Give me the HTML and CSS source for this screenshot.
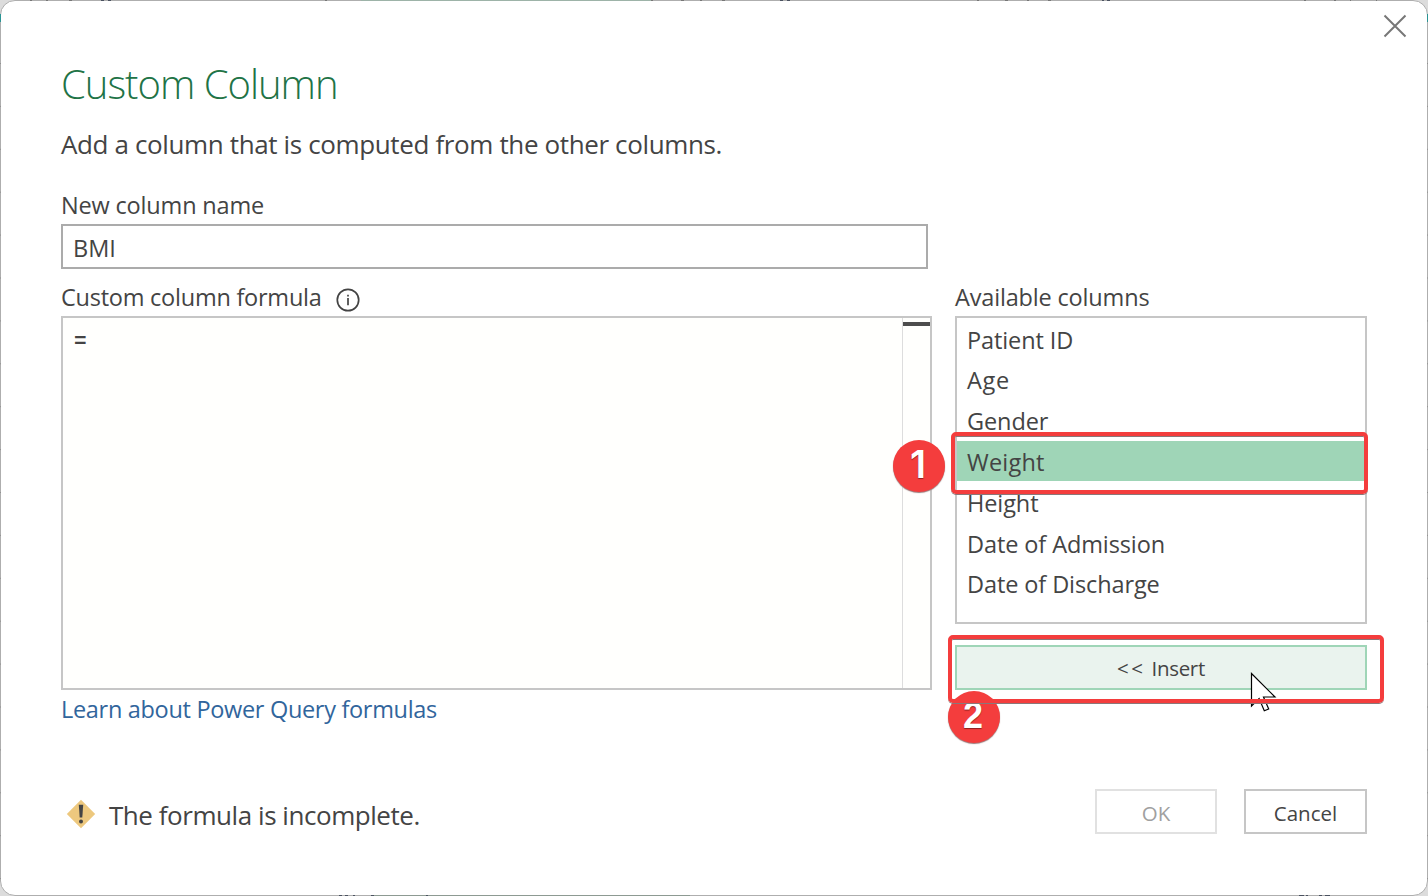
FILE: index.html
```
<!DOCTYPE html>
<html lang="en">
<head>
<meta charset="utf-8">
<title>Custom Column</title>
<link rel="stylesheet" href="styles.css">
</head>
<body>
<main class="dialog">
  <button class="close" aria-label="Close"><svg width="24" height="24" viewBox="0 0 24 24"><path d="M1.5 1.5 22.5 22.5M22.5 1.5 1.5 22.5"/></svg></button>
  <h1 class="title"><span>Custom Column</span></h1>
  <p class="subtitle"><span>Add a column that is computed from the other columns.</span></p>
  <label class="label name-label"><span>New column name</span></label>
  <div class="name-input"><span>BMI</span></div>
  <div class="columns">
    <section class="formula">
      <div class="label formula-label"><span>Custom column formula</span>
        <svg class="info" width="24" height="24" viewBox="0 0 24 24"><circle cx="12" cy="12" r="10.7"/><path d="M12 10v7.2M12 6.8v1.8"/></svg>
      </div>
      <div class="editor"><span class="code">=</span><div class="ruler"></div></div>
      <a class="link"><span>Learn about Power Query formulas</span></a>
    </section>
    <section class="available">
      <div class="label avail-label"><span>Available columns</span></div>
      <ul class="list">
        <li>Patient ID</li>
        <li class="short">Age</li>
        <li>Gender</li>
        <li class="selected">Weight</li>
        <li>Height</li>
        <li>Date of Admission</li>
        <li>Date of Discharge</li>
      </ul>
      <button class="btn insert"><span class="arrows">&lt;&lt;</span><span>Insert</span></button>
    </section>
  </div>
  <footer class="footer">
    <svg class="warn" width="30" height="30" viewBox="0 0 30 30"><path class="diamond" d="M15 .8 29.2 15 15 29.2.8 15Z"/><path class="bang" d="M12.8 5.8h4.4l-.9 12.6h-2.6Z"/><circle class="bang" cx="15" cy="22.4" r="2"/></svg>
    <p class="message"><span>The formula is incomplete.</span></p>
    <button class="btn ok" disabled><span>OK</span></button>
    <button class="btn cancel"><span>Cancel</span></button>
  </footer>
</main>
<svg class="backdrop" width="1428" height="896" viewBox="0 0 1428 896">
  <path stroke="#9db3a8" d="M361 .5H651"/>
  <path stroke="#8d9a92" d="M374 895.5H690"/>
  <path stroke="#777" d="M30 .5h2M46 .5h2M69 .5h3M325 .5h2M651 .5h2M681 .5h3M700 .5h2M722 .5h3M977 .5h2M1005 .5h3M1027 .5h2M1048 .5h3M1304 .5h2M1334 .5h2M1350 .5h1M1376 .5h1"/>
  <path stroke="#4a5260" d="M101 .5h3M108 .5h3M780 .5h3M787 .5h3M1102 .5h2M1107 .5h3M339 895.5h3M345 895.5h3M353 895.5h2M371 895.5h3M426 895.5h2M1299 895.5h5M1306 895.5h2M1319 895.5h3M1325 895.5h5"/>
  <path class="ticks" stroke-dasharray="1 41.9" d="M.5 63V880M1427.5 63V880"/>
  <path stroke="#2a9494" d="M.5 14v8M1427.5 14v8"/>
</svg>
<div class="badge badge-one"><span>1</span></div>
<div class="badge badge-two"><span>2</span></div>
<svg class="cursor" width="28" height="42" viewBox="0 0 28 42"><path d="M1.5 1.5V34l7.6-7.4 5.2 12.2 4.4-1.8-5.2-12H25Z"/></svg>
<div class="frame frame-one"></div>
<div class="frame frame-two"></div>
</body>
</html>
```
FILE: styles.css
```
* { box-sizing: border-box; margin: 0; padding: 0; }
body {
  width: 1428px; height: 896px; overflow: hidden; position: relative;
  background: #dcdcdc;
  font-family: "Open Sans", "Noto Sans", sans-serif; color: #444;
}
button { font: inherit; color: inherit; background: none; border: 0; }
.dialog {
  width: 1428px; height: 896px; padding: 59px 60px 0;
  background: #fff; border: 1px solid #aeaeae; border-radius: 15px;
  display: flex; flex-direction: column;
}
.backdrop { position: absolute; left: 0; top: 0; pointer-events: none; }
.ticks { stroke: #919191; }
.close { position: absolute; left: 1383px; top: 14px; width: 24px; height: 24px; }
.close svg { display: block; fill: none; stroke: #777; stroke-width: 2; }
.title { font-size: 40px; line-height: 48px; font-weight: 300; letter-spacing: -1px; color: #217346; white-space: nowrap; }
.subtitle { font-size: 26px; line-height: 34px; margin-top: 19px; letter-spacing: -.37px; white-space: nowrap; }
.label { font-size: 23.5px; line-height: 32px; height: 32px; display: block; letter-spacing: -.17px; white-space: nowrap; }
.name-label { margin-top: 28px; }
.name-input {
  width: 867px; height: 45px; margin-top: 3px; padding-left: 10px;
  border: 2px solid #ababab; font-size: 23.5px; line-height: 44px;
}
.columns { display: grid; grid-template-columns: 871px 412px; column-gap: 23px; margin-top: 12px; }
.formula-label { display: flex; align-items: center; gap: 14px; letter-spacing: -.24px; }
.info { fill: none; stroke: #444; stroke-width: 1.7; margin-top: 6px; }
.editor {
  height: 374px; margin-top: 3px; border: 2px solid #c6c6c6; background: #fffffd;
  display: flex; justify-content: space-between; padding-left: 11px;
}
.code { font: bold 21px/47px "Liberation Mono", monospace; height: 47px; }
.ruler { width: 28px; height: 100%; border-left: 1px solid #ddd; background: linear-gradient(#4d4d4d, #4d4d4d) 0 4px / 28px 4px no-repeat; background-origin: border-box; }
.link { display: block; height: 32px; margin-top: 3px; font-size: 23.5px; line-height: 32px; letter-spacing: -.31px; color: #31659c; white-space: nowrap; }
.list { list-style: none; height: 308px; margin-top: 3px; padding-top: .6px; border: 2px solid #c6c6c6; display: flex; flex-direction: column; }
.list li { height: 40.8px; line-height: 43.8px; padding-left: 10px; font-size: 23.5px; letter-spacing: -.1px; white-space: nowrap; }
.list .short { letter-spacing: .7px; }
.list .selected { letter-spacing: .2px; background: linear-gradient(#9fd5b7, #9fd5b7) 0 0 / 100% 40px no-repeat; }
.btn { display: flex; align-items: center; justify-content: center; height: 45px; font-size: 20.5px; border: 2px solid #c6c6c6; padding-top: 3px; }
.insert { width: 412px; margin-top: 21px; background: #eaf3ee; border-color: #9fd5b7; padding-top: 1px; gap: 6px; letter-spacing: -.3px; }
.arrows { letter-spacing: 2.5px; }
.footer { display: flex; align-items: center; margin-top: 64px; height: 45px; }
.warn { margin: 4px 0 0 5px; }
.diamond { fill: #edc87e; }
.bang { fill: #444; }
.message { font-size: 26px; line-height: 34px; margin: 6px auto 0 13px; letter-spacing: -.45px; white-space: nowrap; }
.ok { width: 122px; color: #a0a0a0; border-color: #e1e1e1; }
.cancel { width: 123px; margin-left: 27px; }
.frame { position: absolute; border: 4px solid #f43d3d; border-radius: 5px; box-shadow: 0 1px 0 #8b7779, inset 0 1px 0 #8b7779; }
.frame-one { left: 951px; top: 432px; width: 417px; height: 62px; }
.frame-two { left: 948px; top: 635px; width: 436px; height: 68px; }
.badge {
  position: absolute; width: 52px; height: 52px; border-radius: 50%; background: #f43d3d; color: #fff;
  font: 600 38px/48px Inter, sans-serif; text-align: center; padding-right: 2px; text-shadow: 0 1px 1px #8b2020; box-shadow: 0 1px 1px #9a7777;
}
.badge-one { left: 893px; top: 440px; }
.badge-two { left: 948px; top: 691px; font: 600 36px/50px "Liberation Sans", sans-serif; }
.cursor { position: absolute; left: 1250px; top: 672px; fill: #fff; stroke: #000; stroke-width: 1.2; }
```
